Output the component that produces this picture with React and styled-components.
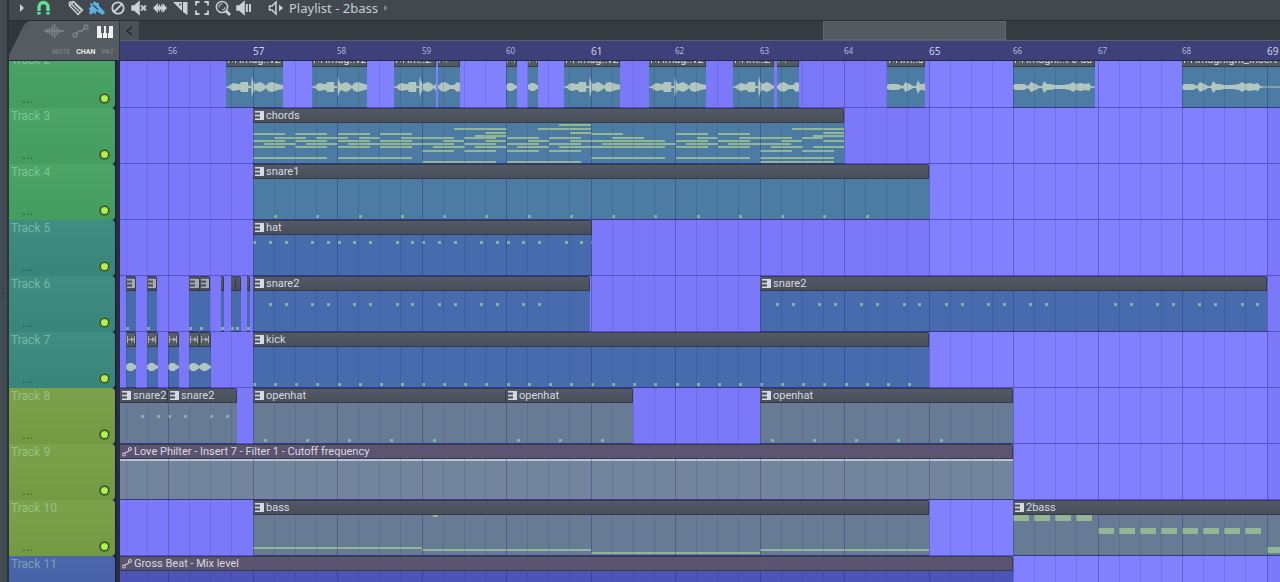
import React from 'react'
import styled, { createGlobalStyle, css } from 'styled-components'

const GlobalStyle = createGlobalStyle`
  * {
    box-sizing: border-box;
  }
  body {
    margin: 0;
    background: #40484f;
    font-family: Roboto, "Liberation Sans", sans-serif;
  }
  button {
    border: 0;
    padding: 0;
    background: none;
    color: inherit;
    font: inherit;
  }
`

// timeline scale: the view starts a little before bar 56
const BAR = 84.5
const STEP = BAR / 16
const ORIGIN = 133
const FIRST_BAR = 55
const LAST_BAR = 70
const barX = bar => Math.floor(ORIGIN + (bar - 57) * BAR)

const Window = styled.div`
  display: flex;
  height: 100vh;
  overflow: hidden;
  background: #40484f;
`

const Edge = styled.div`
  display: flex;
  justify-content: center;
  align-items: center;
  flex: none;
  width: 9px;
  background: #434b52;
  border-right: 2px solid #2b3238;
`

const Main = styled.main`
  display: flex;
  flex-direction: column;
  flex: 1;
  min-width: 0;
`

const Toolbar = styled.header`
  display: flex;
  align-items: center;
  height: 20px;
  padding: 0 3px 4px;
  background: #41494f;
  color: #ccd2d6;
`

const ToolGroup = styled.div`
  display: flex;
  margin-right: ${p => p.$gap}px;
`

const Tool = styled.button`
  display: flex;
  align-items: center;
  justify-content: center;
  width: 21px;
  height: 16px;
  color: ${p => p.$color || '#ccd2d6'};
`

const Title = styled.h1`
  display: flex;
  align-items: center;
  gap: 6px;
  margin: 0 0 0 3px;
  font-family: "Noto Sans", sans-serif;
  font-size: 13px;
  line-height: 16px;
  font-weight: 400;
  color: #c6cdd3;
`

const Top = styled.div`
  display: grid;
  grid-template-columns: 111px 1fr;
  height: 41px;
  border-top: 1px solid #262d33;
  border-bottom: 1px solid #25284a;
`

const Filter = styled.div`
  background: #2f363c;
`

const FilterShape = styled.div`
  display: flex;
  flex-direction: column;
  justify-content: space-between;
  height: 39px;
  padding: 2px 4px 3px 0;
  margin-right: 1px;
  background: #545b61;
  clip-path: polygon(20px 0, 100% 0, 100% 100%, 0 100%, 0 34px, 15px 4px);
`

const FilterIcons = styled.div`
  display: grid;
  grid-template-columns: 27px 27px 21px;
  justify-content: end;
  justify-items: center;
`

const FilterLabels = styled.div`
  display: flex;
  justify-content: flex-end;
  gap: 6px;
  padding-right: 1px;
`

const FilterButton = styled.button`
  height: 14px;
  color: ${p => (p.$on ? '#eef1f3' : '#7e858a')};
`

const FilterLabel = styled.button`
  height: 10px;
  font-size: 7px;
  line-height: 10px;
  font-weight: 700;
  color: ${p => (p.$on ? '#e4e8ea' : '#757c81')};
`

const Timeline = styled.div`
  display: flex;
  flex-direction: column;
  min-width: 0;
  overflow: hidden;
`

const ScrollRow = styled.div`
  display: flex;
  height: 20px;
  border-bottom: 1px solid #596073;
  background: #353c42;
`

const ScrollButton = styled.button`
  display: flex;
  align-items: center;
  justify-content: center;
  width: 19px;
  background: #4a5258;
  color: #1f262b;
`

const Rail = styled.div`
  flex: 1;
  padding-left: 59%;
`

const Thumb = styled.div`
  width: 40%;
  height: 100%;
  background: #535a60;
  border: 1px solid #60676c;
`

const Ruler = styled.div`
  display: flex;
  height: 19px;
  background: #3e4079;
`

const BarNumber = styled.span`
  flex: none;
  font-family: "Noto Sans", sans-serif;
  font-size: ${p => (p.$strong ? 10 : 8)}px;
  line-height: 20px;
  color: ${p => (p.$strong ? '#cfd0ee' : '#b4b5dc')};
`

const Viewport = styled.div`
  flex: 1;
  min-height: 0;
  overflow: hidden;
`

// the list is scrolled down by a few pixels
const Tracks = styled.div`
  margin-top: -9px;
`

const TrackRow = styled.section`
  display: grid;
  grid-template-columns: 106px 5px 1fr;
  height: 56px;
  background: #20243c;
`

const TrackHead = styled.div`
  display: flex;
  flex-direction: column;
  justify-content: space-between;
  padding: 1px 5px 4px 2px;
  border-radius: 0 4px 4px 0;
  background: linear-gradient(rgba(255, 255, 255, 0.03), rgba(0, 0, 0, 0.03)), ${p => p.$color};
`

const TrackName = styled.h2`
  margin: 0;
  font-size: 12px;
  line-height: 15px;
  font-weight: 400;
  color: rgba(190, 235, 205, 0.45);
`

const TrackFoot = styled.div`
  display: flex;
  align-items: center;
  justify-content: space-between;
  padding-left: 11px;
`

const Dots = styled.button`
  height: 12px;
  font-size: 14px;
  line-height: 12px;
  color: rgba(15, 45, 45, 0.6);
`

const Led = styled.input`
  appearance: none;
  width: 11px;
  height: 11px;
  margin: 0;
  border: 2px solid #214a26;
  border-radius: 50%;
  outline: 1px solid rgba(190, 225, 120, 0.35);
  outline-offset: -1px;
  background: #b4ee50;
`

const Gutter = styled.div`
  background: #292c47;
  border-left: 1px solid #1b1e33;
`

const Lane = styled.div`
  position: relative;
  display: flex;
  min-width: 0;
  overflow: hidden;
  background: #7b79fa;
`

const GridLines = styled.svg`
  position: absolute;
  top: 0;
  left: 0;
  pointer-events: none;
`

const ClipBox = styled.article`
  display: flex;
  flex-direction: column;
  flex: none;
  overflow: hidden;
  border-bottom: 1px solid #34398c;
`

const headColors = {
  pattern: 'linear-gradient(#535968, #484f57)',
  audio: 'linear-gradient(#596066, #50585a)',
  automation: 'linear-gradient(#5b5570, #5c526f)'
}

// sits above the beat lines, which only cross the clip body
const ClipHead = styled.div`
  position: relative;
  z-index: 2;
  display: flex;
  align-items: center;
  gap: 2px;
  height: 15px;
  padding-left: 2px;
  overflow: hidden;
  border: 1px solid #363b4b;
  border-left-width: 0;
  border-radius: 0 2px 0 0;
  background: ${p => headColors[p.$kind]};
  color: #d6dae0;
  font-size: 11px;
  line-height: 12px;
  font-weight: 400;
  white-space: nowrap;
  svg {
    flex: none;
  }
  ${p => p.$tiny && css`
    padding-left: 1px;
    color: #a5abb0;
  `}
`

const ClipBody = styled.svg`
  display: block;
  background: ${p => p.$color};
`

const ClipLayer = styled.div`
  position: relative;
  display: flex;
`

const Svg = ({ w = 16, h = 16, children }) => (
  <svg width={w} height={h} viewBox={`0 0 ${w} ${h}`} fill="none" stroke="currentColor" strokeWidth="1.5" aria-hidden="true">
    {children}
  </svg>
)

const icons = {
  menu: <path d="M5 4l4 4-4 4z" fill="currentColor" stroke="none" />,
  magnet: (
    <>
      <path d="M3 14.500V7.500a4.500 5 0 0 1 9 0v7" strokeWidth="3.4" />
      <path d="M1 11.500h4.2M9.800 11.500h4.2" stroke="#41494f" strokeWidth="1" />
    </>
  ),
  pencil: (
    <>
      <path d="M1.5 2.5l4-1 9 8.500-4.500 4.500-8.500-9z" />
      <path d="M4 4.500l7.500 7.500M6.500 3.500L13 10M1.500 6l4-4" strokeWidth="1.200" />
    </>
  ),
  brush: (
    <g fill="currentColor" stroke="none">
      <path d="M1 3l3 1 1-3 3 2 2 0 0 3 2 2 4 4.500-2.500 2.500-5-3.500-1.500 0-.5 3-2-2-2 2-2.500-1 1-3-1.500-2 2.500-2z" />
      <path d="M4 5l5 4.500" stroke="#41494f" />
    </g>
  ),
  erase: (
    <>
      <circle cx="8" cy="8" r="5.700" strokeWidth="1.800" />
      <path d="M4 12l8-8" strokeWidth="1.800" />
    </>
  ),
  mute: (
    <>
      <path d="M1 6h2.500L8 2v12L3.500 10H1z" fill="currentColor" />
      <path d="M10 5.500l5 5M15 5.500l-5 5" strokeWidth="1.800" />
    </>
  ),
  slip: <path d="M1 8l5-5v3.500h1V4.500h1v2h1v-2h1v2h.500V3L15 8l-4.500 5V9.500H10v2H9v-2H8v2H7v-2H6V13z" fill="currentColor" stroke="none" />,
  slice: (
    <g fill="currentColor" stroke="none">
      <path d="M0 2h9v9z" />
      <path d="M10 2h4.500v13L10 12z" />
      <circle cx="7" cy="4.500" r="1" fill="#41494f" />
    </g>
  ),
  select: <path d="M2 5.500V2h3.500M10.500 2H14v3.500M14 10.500V14h-3.500M5.500 14H2v-3.500" strokeWidth="1.800" />,
  zoom: (
    <>
      <circle cx="7" cy="7" r="5.600" />
      <path d="M11 11l4 4" strokeWidth="2.800" />
      <path d="M4 7.500A3 3 0 0 1 7.500 4M10 7a3 3 0 0 1-3 3" strokeWidth="1.200" opacity=".8" />
    </>
  ),
  playback: (
    <>
      <path d="M1 6h2.500L8 2v12L3.500 10H1z" fill="currentColor" />
      <path d="M10.800 4v8M14 4v8" strokeWidth="2" />
    </>
  ),
  speaker: (
    <>
      <path d="M1.500 6H4l4-4v12L4 10H1.500z" />
      <path d="M11 4.500l4 3.500-4 3.500z" fill="currentColor" stroke="none" />
    </>
  )
}

const PatternIcon = () => (
  <svg width="9" height="9" viewBox="0 0 9 9" fill="currentColor" aria-hidden="true">
    <path d="M0 0h9v9H0V7.600h5V5.300H0V3.700h5V1.400H0z" />
  </svg>
)

const AudioIcon = () => (
  <svg width="9" height="9" viewBox="0 0 9 9" fill="currentColor" aria-hidden="true">
    <path d="M0 1h1v7H0zM1 4h3V2l3 2V1h1v7H7V5L4 7V5H1z" />
  </svg>
)

const AutomationIcon = () => (
  <svg width="10" height="10" viewBox="0 0 10 10" fill="none" stroke="currentColor" aria-hidden="true">
    <circle cx="2" cy="7.500" r="1.500" />
    <circle cx="8" cy="2" r="1.500" />
    <path d="M3 6.500L4 5h2l1-2" />
  </svg>
)

const clipIcons = { pattern: PatternIcon, audio: AudioIcon, automation: AutomationIcon }

// amplitude envelopes, [x, amplitude] in pixels
const WAVES = {
  long: [[0, 0.5], [3, 1], [5, 3], [8, 4], [12, 3], [14, 3], [15, 5], [22, 5], [22.5, 1], [25, 1], [26, 11], [27, 6], [29, 3], [34, 5], [38, 3], [40, 1], [42, 4], [46, 5], [52, 3], [57, 2]],
  short: [[0, 1], [3, 4], [7, 5], [12, 2], [16, 2], [19, 5], [22, 4]],
  blob: [[0, 2], [3, 4], [6, 4], [9, 2], [11, 1]],
  vox: [[0, 2], [3, 3], [11, 3], [15, 1], [17, 2], [18, 5], [20, 4], [23, 3], [26, 1], [29, 1], [31, 7], [33, 3], [36, 3], [38, 4]],
  phrase: [[0, 2], [3, 3], [11, 3], [15, 1], [18, 5], [20, 4], [23, 3], [26, 1], [29, 1], [31, 6], [34, 3], [38, 3], [42, 2], [50, 2], [57, 3], [60, 5], [63, 3], [68, 4], [72, 3], [76, 4], [78, 1], [82, 0.5], [160, 0.5]]
}

const wavePath = points => {
  const top = points.map(([x, a]) => `${x} ${20 - a}`)
  const bottom = [...points].reverse().map(([x, a]) => `${x} ${20 + a}`)
  return `M${top.join('L')}L${bottom.join('L')}Z`
}

const dots = (y, steps) => steps.map(s => [s, y, 0])
const every = (from, gap, count) => Array.from({ length: count }, (_, i) => from + i * gap)
const repeat = (pattern, bars) => bars.flatMap(b => pattern.map(s => s + b * 16))

// y of the piano roll row -> [start, end] in steps
const chordRows = {
  1: [[58, 64]],
  5: [[38, 48], [54, 64], [102, 112]],
  9: [[44, 48], [60, 64], [108, 112]],
  10: [[0, 6], [8, 14], [16, 22], [24, 30], [64, 70], [80, 86], [88, 94]],
  12: [[42, 48], [106, 112]],
  14: [[4, 10], [12, 18], [20, 24], [28, 38], [40, 46], [48, 54], [56, 62], [68, 74], [84, 88], [92, 102], [104, 108]],
  17: [[0, 6], [8, 14], [16, 22], [24, 30], [36, 40], [44, 48], [52, 56], [60, 78], [80, 86], [88, 94], [100, 104], [108, 112]],
  20: [[2, 8], [10, 16], [18, 38], [40, 46], [48, 54], [56, 62], [66, 80], [82, 88], [90, 102]],
  23: [[0, 6], [8, 14], [16, 22], [24, 30], [34, 40], [42, 48], [50, 56], [58, 78], [80, 86], [88, 94], [98, 104], [106, 112]],
  27: [[32, 38], [40, 46], [48, 54], [56, 62], [96, 102], [104, 110]],
  34: [[0, 14], [16, 30], [64, 78], [80, 94], [96, 110]],
  38: [[32, 46], [48, 62], [96, 110]]
}
const chordNotes = Object.entries(chordRows).flatMap(([y, list]) => list.map(([a, b]) => [a, +y, b - a]))

const pat = (start, end, name, notes = [], noteHeight = 2) => ({ kind: 'pattern', start, end, name, notes, noteHeight })
const audio = (start, end, name, wave) => ({ kind: 'audio', start, end, name, wave })
const auto = (start, end, name, line) => ({ kind: 'automation', start, end, name, line })

const hit = dots(36, [0])

const tracks = [
  {
    name: 'Track 2', color: '#46a262', body: '#4c7ba3',
    clips: [
      audio(106, 163, 'imag..v2', 'long'),
      audio(192, 247, 'imag..v2', 'long'),
      audio(274, 316, 'im..2', 'long'),
      audio(318, 340, '', 'short'),
      audio(386, 397, '', 'blob'),
      audio(408, 418, '', 'blob'),
      audio(444, 500, 'imag..v2', 'long'),
      audio(529, 586, 'imag..v2', 'long'),
      audio(613, 654, 'im..2', 'long'),
      audio(657, 679, '', 'short'),
      audio(767, 805, 'im..s', 'vox'),
      audio(893, 975, 'imagni..t 0 us', 'phrase'),
      audio(1062, 1220, 'imagnight_Insert', 'phrase')
    ]
  },
  { name: 'Track 3', color: '#46a262', body: '#4c7ba3', clips: [pat(133, 724, 'chords', chordNotes)] },
  { name: 'Track 4', color: '#46a262', body: '#4c7ba3', clips: [pat(133, 809, 'snare1', dots(36, every(4, 8, 15)))] },
  {
    name: 'Track 5', color: '#3a897f', body: '#486bae',
    clips: [pat(133, 472, 'hat', dots(6, [...repeat([0, 3, 6, 11, 14], [0, 1, 2, 3]), 64]))]
  },
  {
    name: 'Track 6', color: '#3a897f', body: '#486bae',
    clips: [
      pat(6, 16, '', hit),
      pat(27, 37, '', hit),
      pat(69, 80, '', hit),
      pat(80, 90, '', hit),
      pat(101, 104, '', hit),
      pat(111, 116, '', hit),
      pat(116, 121, '', hit),
      pat(127, 130, '', hit),
      pat(133, 470, 'snare2', dots(12, [...repeat([3, 6, 11, 14], [0, 1, 2]), 51, 54])),
      pat(640, 1147, 'snare2', dots(12, [...repeat([3, 6, 11, 14], [0, 1, 2]), 51, 54, ...repeat([3, 6, 11, 14], [4, 5])]))
    ]
  },
  {
    name: 'Track 7', color: '#3a897f', body: '#486bae',
    clips: [
      audio(6, 16, '', 'blob'),
      audio(27, 38, '', 'blob'),
      audio(48, 59, '', 'blob'),
      audio(69, 80, '', 'blob'),
      audio(80, 91, '', 'blob'),
      pat(133, 809, 'kick', dots(36, every(0, 4, 32)))
    ]
  },
  {
    name: 'Track 8', color: '#779f45', body: '#677b95',
    clips: [
      pat(0, 48, 'snare2', dots(12, [4, 7])),
      pat(48, 117, 'snare2', dots(12, [0, 3, 8, 11])),
      pat(133, 386, 'openhat', dots(36, every(2, 8, 5))),
      pat(386, 513, 'openhat', dots(36, every(2, 8, 3))),
      pat(640, 893, 'openhat', dots(36, every(2, 8, 5)))
    ]
  },
  {
    name: 'Track 9', color: '#779f45', body: '#73859c',
    clips: [auto(0, 893, 'Love Philter - Insert 7 - Filter 1 - Cutoff frequency', true)]
  },
  {
    name: 'Track 10', color: '#779f45', body: '#677b95',
    clips: [
      pat(133, 809, 'bass', [[0, 32, 32], [32, 34, 32], [64, 37, 32], [96, 34, 32], [34, 0, 1]]),
      pat(893, 1220, '2bass', [
        ...every(0, 4, 4).map(s => [s, 0, 3]),
        ...every(16, 4, 8).map(s => [s, 13, 3]),
        [48, 32, 8]
      ], 6)
    ]
  },
  { name: 'Track 11', color: '#4661a9', body: '#4c54ba', clips: [auto(0, 893, 'Gross Beat - Mix level')] }
]

function Clip({ clip, gap, color }) {
  const width = clip.end - clip.start
  const Icon = clipIcons[clip.kind]
  return (
    <ClipBox style={{ width, marginLeft: gap }}>
      <ClipHead $kind={clip.kind} $tiny={!clip.name}>
        {width > 8 && <Icon />}
        {clip.name}
      </ClipHead>
      <ClipBody $color={color} width={width} height="40" aria-hidden="true">
        {clip.wave && <path d={wavePath(WAVES[clip.wave])} fill="#b3c6bd" />}
        {clip.line && <rect y="0" width={width} height="2" fill="#b9c2d2" />}
        {(clip.notes || []).map(([step, y, len], i) => (
          <rect
            key={i}
            x={Math.round(step * STEP)}
            y={y}
            width={len ? Math.round(len * STEP) : 3}
            height={len ? clip.noteHeight : 3}
            fill={len ? '#93b695' : '#82b3a8'}
          />
        ))}
      </ClipBody>
    </ClipBox>
  )
}

// every other block of four bars is lighter
function Grid() {
  const blocks = []
  for (let b = 57; b < LAST_BAR; b += 8) blocks.push(b)
  return (
    <GridLines width="100%" height="56" aria-hidden="true">
      {blocks.map(b => (
        <rect key={b} x={barX(b)} y="0" width={barX(b + 4) - barX(b)} height="56" fill="#8180ff" />
      ))}
      <rect x="0" y="55" width="100%" height="1" fill="#5654c6" />
    </GridLines>
  )
}

function BeatLines() {
  const beats = []
  for (let i = FIRST_BAR * 4; i < LAST_BAR * 4; i++) beats.push(i)
  return (
    <GridLines width={barX(LAST_BAR)} height="56" aria-hidden="true">
      {beats.map(i => (
        <rect key={i} x={barX(i / 4)} y="0" width="1" height="56" fill="#1c1a70" opacity={i % 4 ? 0.14 : 0.32} />
      ))}
    </GridLines>
  )
}

function Track({ track }) {
  return (
    <TrackRow aria-label={track.name}>
      <TrackHead $color={track.color}>
        <TrackName>{track.name}</TrackName>
        <TrackFoot>
          <Dots aria-label={`${track.name} options`}>...</Dots>
          <Led type="checkbox" defaultChecked aria-label={`${track.name} enabled`} />
        </TrackFoot>
      </TrackHead>
      <Gutter />
      <Lane>
        <Grid />
        <ClipLayer>
          {track.clips.map((clip, i) => (
            <Clip key={i} clip={clip} color={track.body} gap={clip.start - (i ? track.clips[i - 1].end : 0)} />
          ))}
        </ClipLayer>
        <BeatLines />
      </Lane>
    </TrackRow>
  )
}

const tools = ['pencil', 'brush', 'erase', 'mute', 'slip', 'slice', 'select', 'zoom', 'playback']

function App() {
  const bars = []
  for (let b = 56; b < LAST_BAR; b++) bars.push(b)

  return (
    <Window>
      <GlobalStyle />
      <Edge>
        <svg width="3" height="15" viewBox="0 0 3 15" fill="#343b41" aria-hidden="true">
          <path d="M0 0h2v2H0zM0 4h2v2H0zM0 8h2v2H0zM0 12h2v2H0z" />
        </svg>
      </Edge>
      <Main>
        <Toolbar>
          <ToolGroup $gap={11}>
            <Tool aria-label="menu"><Svg>{icons.menu}</Svg></Tool>
            <Tool aria-label="snap" $color="#62e295"><Svg>{icons.magnet}</Svg></Tool>
          </ToolGroup>
          <ToolGroup $gap={11}>
            {tools.map(t => (
              <Tool key={t} aria-label={t} $color={t === 'brush' ? '#5cb0e6' : undefined}>
                <Svg>{icons[t]}</Svg>
              </Tool>
            ))}
          </ToolGroup>
          <Tool aria-label="preview"><Svg>{icons.speaker}</Svg></Tool>
          <Title>
            Playlist - 2bass
            <svg width="4" height="6" viewBox="0 0 4 6" fill="#7b8389" aria-hidden="true"><path d="M0 0l4 3-4 3z" /></svg>
          </Title>
        </Toolbar>

        <Top>
          <Filter>
            <FilterShape>
              <FilterIcons>
                <FilterButton aria-label="audio clips">
                  <Svg w={20} h={14}>
                    <path d="M0 7h20M3 5v4M5.500 4v6M8 2v10M10.500 0v14M13 3v8M15.500 5v4" />
                  </Svg>
                </FilterButton>
                <FilterButton aria-label="automation clips">
                  <Svg w={18} h={14}>
                    <circle cx="3" cy="11" r="2" />
                    <circle cx="14" cy="3" r="2" />
                    <path d="M4.500 9.500L7 7h3l2.500-2.500" />
                  </Svg>
                </FilterButton>
                <FilterButton aria-label="patterns" $on>
                  <svg width="16" height="12" viewBox="0 0 16 12" fill="currentColor" aria-hidden="true">
                    <path d="M0 0h16v12H0z" />
                    <path d="M4 0h3v7H6v5H5V7H4zM9 0h3v7h-1v5h-1V7H9z" fill="#545b61" />
                  </svg>
                </FilterButton>
              </FilterIcons>
              <FilterLabels>
                <FilterLabel>NOTE</FilterLabel>
                <FilterLabel $on>CHAN</FilterLabel>
                <FilterLabel>PAT</FilterLabel>
              </FilterLabels>
            </FilterShape>
          </Filter>
          <Timeline>
            <ScrollRow>
              <ScrollButton aria-label="scroll left">
                <svg width="7" height="10" viewBox="0 0 7 10" fill="none" stroke="currentColor" strokeWidth="1.500" aria-hidden="true"><path d="M6 1L1 5l5 4" /></svg>
              </ScrollButton>
              <Rail>
                <Thumb />
              </Rail>
            </ScrollRow>
            <Ruler>
              {bars.map((b, i) => (
                <BarNumber
                  key={b}
                  $strong={b % 4 === 1}
                  style={{ width: barX(b + 1) - barX(b), marginLeft: i ? 0 : barX(b) }}
                >
                  {b}
                </BarNumber>
              ))}
            </Ruler>
          </Timeline>
        </Top>

        <Viewport>
          <Tracks>
            {tracks.map(t => <Track key={t.name} track={t} />)}
          </Tracks>
        </Viewport>
      </Main>
    </Window>
  )
}

export default App
